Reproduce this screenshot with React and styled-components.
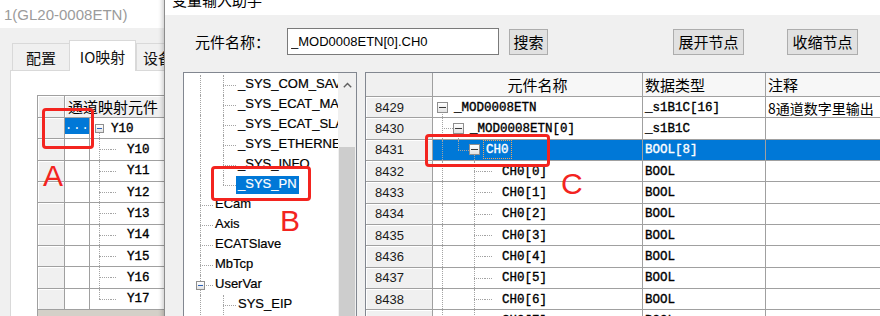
import styled, { createGlobalStyle } from "styled-components";

const CJK = `"Noto Sans CJK SC", sans-serif`;
const UI = `"Liberation Sans", "Noto Sans CJK SC", sans-serif`;
const MONO = `"Liberation Mono", "Noto Sans CJK SC", monospace`;
const GRID = "#a0a0a0";
const SELECT = "#0078d7";
const MARK = "#f3241f";

const GlobalStyle = createGlobalStyle`
  *, *::before, *::after { box-sizing: border-box; }
  html, body { margin: 0; padding: 0; background: #f0f0f0; }
  body { font-family: ${UI}; color: #000; }
`;

const Screen = styled.div`
  position: relative;
  width: 880px;
  height: 316px;
  overflow: hidden;
  background: #f0f0f0;
`;

/* ---------- tree connectors (shared) ---------- */
const VERT = ["pipe", "tee", "end", "boxDown", "teeBox"];
const HORIZ = ["tee", "end", "leaf", "teeBox"];

const Guide = styled.span`
  position: relative;
  flex: none;
  display: flex;
  align-items: center;
  width: ${(p) => p.$w}px;
  &::before {
    content: "";
    position: absolute;
    left: ${(p) => p.$x}px;
    top: ${(p) => (p.$kind === "boxDown" ? "50%" : "0")};
    bottom: ${(p) => (p.$kind === "end" ? "50%" : "0")};
    border-left: 1px dotted ${(p) => p.$line};
    display: ${(p) => (VERT.includes(p.$kind) ? "block" : "none")};
  }
  &::after {
    content: "";
    position: absolute;
    top: 50%;
    left: ${(p) => (p.$kind === "leaf" ? 0 : p.$x)}px;
    ${(p) => (p.$kind === "leaf" ? `width: ${p.$leaf}px;` : "right: 0;")}
    border-top: 1px dotted ${(p) => p.$line};
    display: ${(p) => (HORIZ.includes(p.$kind) ? "block" : "none")};
  }
`;

const ExpandBox = styled.span`
  position: relative;
  z-index: 1;
  width: ${(p) => p.$size}px;
  height: ${(p) => p.$size}px;
  margin-left: ${(p) => p.$x - Math.floor(p.$size / 2)}px;
  border: 1px solid #8f8f8f;
  background: linear-gradient(#ffffff, #e2e2e2);
  &::after {
    content: "";
    position: absolute;
    left: 1px;
    right: 1px;
    top: ${(p) => Math.floor((p.$size - 3) / 2)}px;
    height: 1px;
    background: ${(p) => p.$minus};
  }
`;

function Gutter({ kinds, w, x, box, leaf = 7, line = "#a3a3a3", minus = "#333" }) {
  return kinds.map((k, i) => (
    <Guide key={i} $kind={k} $w={typeof w === "function" ? w(k) : w} $x={x} $leaf={leaf} $line={line}>
      {k === "boxDown" || k === "teeBox" ? <ExpandBox $size={box} $x={x} $minus={minus} /> : null}
    </Guide>
  ));
}

/* ---------- host window (left, behind) ---------- */
const HostWindow = styled.div`
  width: 200px;
  height: 100%;
  display: flex;
  flex-direction: column;
`;

const HostTitle = styled.div`
  flex: none;
  height: 28px;
  padding-left: 4px;
  display: flex;
  align-items: center;
  background: #fff;
  color: #9b9b9b;
  font: 15px ${UI};
`;

const TabStrip = styled.div`
  flex: none;
  display: flex;
  align-items: flex-end;
  height: 30px;
  margin-top: 12px;
  padding-left: 12px;
`;

const Tab = styled.div`
  position: relative;
  z-index: ${(p) => (p.$active ? 1 : 0)};
  width: ${(p) => p.$w}px;
  height: ${(p) => (p.$active ? 31 : 27)}px;
  margin-bottom: ${(p) => (p.$active ? -1 : 0)}px;
  margin-left: ${(p) => (p.$active ? -1 : 0)}px;
  display: flex;
  align-items: center;
  justify-content: center;
  background: ${(p) => (p.$active ? "#fff" : "#f0f0f0")};
  border: 1px solid #d9d9d9;
  border-bottom: none;
  font: 15px ${CJK};
  color: #111;
`;

const TabPanel = styled.div`
  flex: 1;
  margin-left: 10px;
  padding: 24px 0 0 26px;
  display: flex;
  flex-direction: column;
  background: #fff;
  border-top: 1px solid #d9d9d9;
  border-left: 1px solid #d9d9d9;
`;

const MapGrid = styled.div`
  display: grid;
  grid-template-columns: 27px 25px 140px;
  grid-template-rows: 22px repeat(9, 21.333px);
  border-top: 1px solid ${GRID};
  border-left: 1px solid ${GRID};
  font: 12.5px ${MONO};
  -webkit-text-stroke: 0.35px #000;
`;

const MapCell = styled.div`
  display: flex;
  align-items: ${(p) => (p.$top ? "flex-start" : "stretch")};
  padding-left: ${(p) => p.$pad || 0}px;
  grid-column: ${(p) => (p.$span ? `span ${p.$span}` : "auto")};
  background: ${(p) => (p.$head ? "#f0f0f0" : "#fff")};
  box-shadow: ${(p) => (p.$head ? "inset 1px 1px #fff" : "none")};
  border-right: 1px solid ${GRID};
  border-bottom: 1px solid ${GRID};
  white-space: nowrap;
  overflow: hidden;
`;

const MapHeadText = styled.span`
  align-self: center;
  font: 15px ${CJK};
  -webkit-text-stroke: 0;
`;

const CellText = styled.span`
  align-self: center;
  padding-top: 1px;
`;

const DotsButton = styled.span`
  width: 100%;
  height: 16px;
  background: ${SELECT};
  color: #fff;
  font: 12px ${MONO};
  -webkit-text-stroke: 0;
  letter-spacing: 1px;
  text-align: center;
  line-height: 17px;
`;

const GridFoot = styled.div`
  flex: 1;
  width: 193px;
  background: #d4d0c8;
  border-left: 1px solid ${GRID};
`;

/* ---------- dialog (front) ---------- */
const Dialog = styled.section`
  position: absolute;
  left: 164px;
  top: -16px;
  width: 724px;
  height: 340px;
  display: flex;
  flex-direction: column;
  background: #f0f0f0;
  border-left: 1px solid #8c8c8c;
  box-shadow: -2px 0 4px rgba(0, 0, 0, 0.18);
`;

const DialogTitle = styled.div`
  flex: none;
  height: 31px;
  padding-left: 7px;
  display: flex;
  align-items: center;
  background: #fff;
  font: 15px ${CJK};
`;

const SearchRow = styled.div`
  flex: none;
  display: flex;
  align-items: center;
  height: 27px;
  margin-top: 13px;
  padding-left: 30px;
`;

const FieldLabel = styled.span`
  width: 92px;
  font: 15px ${CJK};
`;

const SearchInput = styled.input`
  width: 212px;
  height: 27px;
  padding: 0 3px;
  border: 1px solid #7a7a7a;
  background: #fff;
  font: 13px ${UI};
  color: #000;
  outline: none;
`;

const ToolButton = styled.button`
  width: ${(p) => p.$w}px;
  height: 26px;
  margin-left: ${(p) => p.$gap}px;
  padding: 0;
  background: #e1e1e1;
  border: 1px solid #adadad;
  font: 15px ${CJK};
  color: #000;
`;

const DialogBody = styled.div`
  flex: 1;
  display: flex;
  gap: 8px;
  margin-top: 17px;
  padding-left: 18px;
  min-height: 0;
`;

const TreePanel = styled.div`
  flex: none;
  width: 174px;
  display: flex;
  background: #fff;
  border: 1px solid #828790;
  overflow: hidden;
`;

const TreeList = styled.div`
  flex: 1;
  min-width: 0;
  padding-top: 2px;
  overflow: hidden;
`;

const TreeRow = styled.div`
  display: flex;
  height: 20px;
  padding-left: 10px;
  white-space: nowrap;
`;

const TreeLabel = styled.span`
  align-self: center;
  height: 18px;
  padding: 0 2px;
  line-height: 18px;
  font: 13px ${UI};
  -webkit-text-stroke: 0.2px currentColor;
  background: ${(p) => (p.$selected ? SELECT : "transparent")};
  color: ${(p) => (p.$selected ? "#fff" : "#000")};
`;

const ScrollBar = styled.div`
  flex: none;
  width: 18px;
  display: flex;
  flex-direction: column;
  background: #f0f0f0;
`;

const ScrollArrow = styled.div`
  height: 24px;
  display: flex;
  align-items: center;
  justify-content: center;
`;

const ScrollTrack = styled.div`
  flex: 1;
  display: flex;
  padding: 50px 1px 0;
`;

const ScrollThumb = styled.div`
  flex: 1;
  background: #cdcdcd;
`;

const VarTable = styled.div`
  flex: 1;
  display: grid;
  grid-template-columns: 67px 210px 123px 1fr;
  grid-template-rows: 24px;
  grid-auto-rows: 21.333px;
  align-content: start;
  background: #fff;
  border: 1px solid #828790;
  border-right: none;
  border-bottom: none;
  overflow: hidden;
`;

const HeadCell = styled.div`
  display: flex;
  align-items: center;
  justify-content: ${(p) => (p.$center ? "center" : "flex-start")};
  padding-left: ${(p) => (p.$center ? 0 : 2)}px;
  background: ${(p) => (p.$gray ? "#f0f0f0" : "#f7f7f7")};
  border-right: 1px solid ${GRID};
  border-bottom: 1px solid ${GRID};
  font: 15px ${CJK};
  white-space: nowrap;
`;

const RowNo = styled.div`
  display: flex;
  align-items: center;
  padding-left: 9px;
  background: #f0f0f0;
  box-shadow: inset 1px 1px #fff;
  border-right: 1px solid ${GRID};
  border-bottom: 1px solid ${GRID};
  font: 13px ${UI};
  color: #1a1a1a;
`;

const DataCell = styled.div`
  display: flex;
  align-items: stretch;
  min-width: 0;
  padding-left: ${(p) => p.$pad}px;
  overflow: hidden;
  white-space: nowrap;
  background: ${(p) => (p.$selected ? SELECT : "#fff")};
  color: ${(p) => (p.$selected ? "#fff" : "#000")};
  border-right: 1px solid ${GRID};
  border-bottom: 1px solid ${GRID};
  font: ${(p) => (p.$cjk ? `14px ${CJK}` : `12.5px ${MONO}`)};
  -webkit-text-stroke: ${(p) => (p.$cjk ? "0" : "0.35px currentColor")};
`;

const NameText = styled.span`
  align-self: center;
  padding: 1px 2px 0;
  margin-left: -2px;
  line-height: 16px;
  border: 1px dotted ${(p) => (p.$focus ? "#f2a65a" : "transparent")};
`;

/* ---------- annotations ---------- */
const MarkBox = styled.div`
  position: absolute;
  z-index: 5;
  left: ${(p) => p.$x}px;
  top: ${(p) => p.$y}px;
  width: ${(p) => p.$w}px;
  height: ${(p) => p.$h}px;
  border: 3px solid ${MARK};
  border-radius: 4px;
`;

const MarkLetter = styled.div`
  position: absolute;
  z-index: 5;
  left: ${(p) => p.$x}px;
  top: ${(p) => p.$y}px;
  font: 30px/1 ${UI};
  color: ${MARK};
`;

/* ---------- data ---------- */
const mapRows = [
  { label: "Y10", kinds: ["boxDown"], head: true },
  ...["Y10", "Y11", "Y12", "Y13", "Y14", "Y15", "Y16"].map((l) => ({ label: l, kinds: ["tee", "leaf"] })),
  { label: "Y17", kinds: ["end", "leaf"] },
];

const treeRows = [
  { label: "_SYS_COM_SAV", kinds: ["pipe", "tee"] },
  { label: "_SYS_ECAT_MA", kinds: ["pipe", "tee"] },
  { label: "_SYS_ECAT_SLA", kinds: ["pipe", "tee"] },
  { label: "_SYS_ETHERNET", kinds: ["pipe", "tee"] },
  { label: "_SYS_INFO", kinds: ["pipe", "tee"] },
  { label: "_SYS_PN", kinds: ["pipe", "end"], selected: true },
  { label: "ECam", kinds: ["tee"] },
  { label: "Axis", kinds: ["tee"] },
  { label: "ECATSlave", kinds: ["tee"] },
  { label: "MbTcp", kinds: ["tee"] },
  { label: "UserVar", kinds: ["teeBox"] },
  { label: "SYS_EIP", kinds: ["pipe", "tee"] },
];

const varRows = [
  { no: 8429, kinds: ["boxDown"], name: "_MOD0008ETN", type: "_s1B1C[16]", note: "8通道数字里输出" },
  { no: 8430, kinds: ["tee", "boxDown"], name: "_MOD0008ETN[0]", type: "_s1B1C" },
  { no: 8431, kinds: ["pipe", "end", "boxDown"], name: "CH0", type: "BOOL[8]", selected: true },
  ...[0, 1, 2, 3, 4, 5, 6, 7].map((i) => ({
    no: 8432 + i,
    kinds: ["pipe", "blank", "tee", "leaf"],
    name: `CH0[${i}]`,
    type: "BOOL",
  })),
];

export default function App() {
  return (
    <Screen>
      <GlobalStyle />

      <HostWindow>
        <HostTitle>1(GL20-0008ETN)</HostTitle>
        <TabStrip>
          <Tab $w={58}>配置</Tab>
          <Tab $w={67} $active>IO映射</Tab>
          <Tab $w={44}>设备</Tab>
        </TabStrip>
        <TabPanel>
          <MapGrid>
            <MapCell $head />
            <MapCell $span={2} $pad={3} $head>
              <MapHeadText>通道映射元件</MapHeadText>
            </MapCell>
            {mapRows.map((r, i) => [
              <MapCell key={`h${i}`} $head />,
              <MapCell key={`b${i}`} $top>
                {r.head ? <DotsButton>...</DotsButton> : null}
              </MapCell>,
              <MapCell key={`n${i}`} $pad={5}>
                <Gutter kinds={r.kinds} w={16} x={4} box={9} leaf={5} minus="#2c62b8" />
                <CellText>{r.label}</CellText>
              </MapCell>,
            ])}
          </MapGrid>
          <GridFoot />
        </TabPanel>
      </HostWindow>

      <Dialog>
        <DialogTitle>变量输入助手</DialogTitle>
        <SearchRow>
          <FieldLabel>元件名称：</FieldLabel>
          <SearchInput readOnly value="_MOD0008ETN[0].CH0" />
          <ToolButton $w={39} $gap={10}>搜索</ToolButton>
          <ToolButton $w={71} $gap={125}>展开节点</ToolButton>
          <ToolButton $w={71} $gap={43}>收缩节点</ToolButton>
        </SearchRow>
        <DialogBody>
          <TreePanel>
            <TreeList>
              {treeRows.map((r) => (
                <TreeRow key={r.label}>
                  <Gutter
                    kinds={r.kinds}
                    w={(k) => (k === "pipe" ? 23 : 19)}
                    x={6}
                    box={9}
                    minus="#2c62b8"
                  />
                  <TreeLabel $selected={r.selected}>{r.label}</TreeLabel>
                </TreeRow>
              ))}
            </TreeList>
            <ScrollBar>
              <ScrollArrow>
                <svg width="9" height="6" viewBox="0 0 9 6">
                  <path d="M0.8 5.2 L4.5 1.5 L8.2 5.2" fill="none" stroke="#606060" strokeWidth="1.4" />
                </svg>
              </ScrollArrow>
              <ScrollTrack>
                <ScrollThumb />
              </ScrollTrack>
            </ScrollBar>
          </TreePanel>

          <VarTable>
            <HeadCell $gray />
            <HeadCell $center>元件名称</HeadCell>
            <HeadCell>数据类型</HeadCell>
            <HeadCell>注释</HeadCell>
            {varRows.map((r) => [
              <RowNo key={`no${r.no}`}>{r.no}</RowNo>,
              <DataCell key={`nm${r.no}`} $pad={4} $selected={r.selected}>
                <Gutter kinds={r.kinds} w={16} x={5} box={11} leaf={7} minus="#3a3a3a" />
                <NameText $focus={r.selected}>{r.name}</NameText>
              </DataCell>,
              <DataCell key={`ty${r.no}`} $pad={2} $selected={r.selected}>
                <CellText>{r.type}</CellText>
              </DataCell>,
              <DataCell key={`nt${r.no}`} $pad={2} $selected={r.selected} $cjk>
                <CellText>{r.note || ""}</CellText>
              </DataCell>,
            ])}
          </VarTable>
        </DialogBody>
      </Dialog>

      <MarkBox $x={42} $y={108} $w={52} $h={41} />
      <MarkLetter $x={43} $y={161}>A</MarkLetter>
      <MarkBox $x={211} $y={166} $w={100} $h={35} />
      <MarkLetter $x={280} $y={206}>B</MarkLetter>
      <MarkBox $x={425} $y={134} $w={125} $h={33} />
      <MarkLetter $x={561} $y={169}>C</MarkLetter>
    </Screen>
  );
}
